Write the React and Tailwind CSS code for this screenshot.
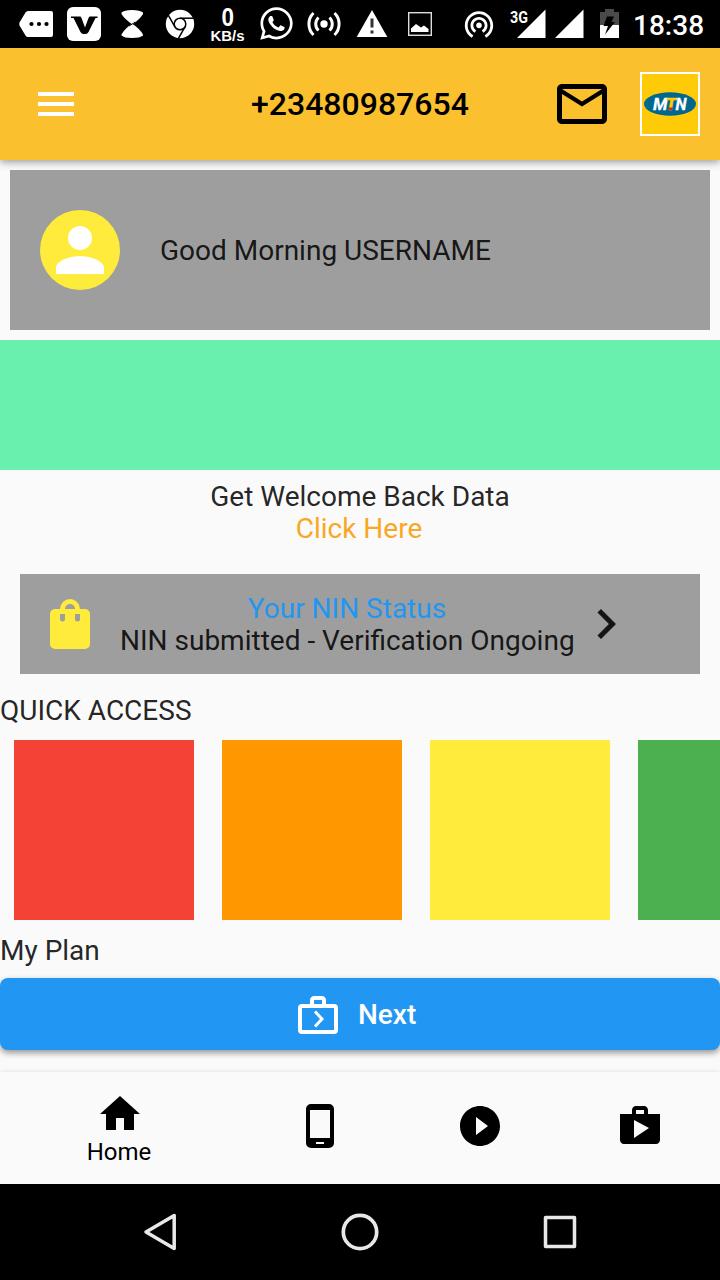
import React from "react";
import {
  MdMailOutline,
  MdPerson,
  MdNavigateNext,
  MdHome,
  MdPlayCircleFilled,
  MdShop,
  MdWifiTethering,
} from "react-icons/md";
import { FaWhatsapp } from "react-icons/fa";

function StatusBar() {
  return (
    <div className="flex h-12 items-center bg-black text-white">
      <svg className="h-12 w-[60px]" viewBox="0 0 60 48">
        <path d="M28 11H51Q53 11 53 13V35Q53 37 51 37H28Q26.500 37 25.500 35.500L19.500 25.500Q19 24 19.500 22.500L25.500 12.500Q26.500 11 28 11Z" fill="#fff" />
        <circle cx="31.500" cy="24" r="2.100" />
        <circle cx="39" cy="24" r="2.100" />
        <circle cx="46.500" cy="24" r="2.100" />
      </svg>
      <svg className="h-12 w-12" viewBox="60 0 48 48">
        <rect x="67" y="7" width="34" height="34" rx="6" fill="#fff" />
        <path d="M71 16.500H80.500L81.500 18L85 27.500L88.500 18L89.500 16.500H97.500V18H95.500L88.500 32Q87.500 34 85.500 34H83.500Q81.500 34 80.500 32L73.500 18H71Z" />
      </svg>
      <svg className="h-12 w-12" viewBox="108 0 48 48">
        <path d="M121.500 14V12.500Q124 10 132 10Q140 10 143 12.500V14Q140 19 132.500 24.500Q124.500 19 121.500 14Z" fill="#fff" />
        <path d="M132 23.500Q140 29 143 34.500V35.500Q140 38 132 38Q124 38 121.500 35.500V34.500Q124.500 29 132 23.500Z" fill="#fff" />
        <path d="M129 26L135.500 22" stroke="#000" strokeWidth="1" />
      </svg>
      <svg className="h-12 w-12" viewBox="156 0 48 48">
        <circle cx="180" cy="24" r="14.200" fill="#fff" />
        <g fill="none" stroke="#000" strokeWidth="1.500">
          <circle cx="180" cy="24" r="5.800" />
          <path d="M180 18.200H193.500" />
          <path d="M180 18.200H193.500" transform="rotate(120 180 24)" />
          <path d="M180 18.200H193.500" transform="rotate(240 180 24)" />
        </g>
      </svg>
      <svg className="h-12 w-12" viewBox="204 0 48 48" fill="#fff">
        <text x="221.500" y="26" fontFamily="Liberation Sans, sans-serif" fontSize="25" fontWeight="700" textLength="12.500" lengthAdjust="spacingAndGlyphs">0</text>
        <text x="210.500" y="40.500" fontFamily="Liberation Sans, sans-serif" fontSize="14" fontWeight="700" textLength="34" lengthAdjust="spacingAndGlyphs">KB/s</text>
      </svg>
      <div className="flex h-12 w-12 items-center justify-center pb-[2px]">
        <FaWhatsapp className="size-[37px]" />
      </div>
      <svg className="h-12 w-12" viewBox="300 0 48 48" fill="none" stroke="#fff" strokeWidth="3">
        <circle cx="324" cy="24" r="3.700" fill="#fff" stroke="none" />
        <path d="M318.500 17.500A9 9 0 0 0 318.500 30.500M329.500 17.500A9 9 0 0 1 329.500 30.500M313.500 13A15.500 15.500 0 0 0 313.500 35M334.500 13A15.500 15.500 0 0 1 334.500 35" />
      </svg>
      <svg className="h-12 w-12" viewBox="348 0 48 48">
        <path d="M372 10L387.300 37H356.700Z" fill="#fff" />
        <path d="M370.500 18.500H373.500V27.500H370.500ZM370.500 30.500H373.500V33.500H370.500Z" fill="#333" />
      </svg>
      <svg className="h-12 w-12" viewBox="396 0 48 48">
        <rect x="408.700" y="12.700" width="22.600" height="22.600" fill="none" stroke="#ddd" strokeWidth="1.400" />
        <path d="M411 32V28.500L416 24L421 27.500L424 25.500L428.500 29V32Z" fill="#fff" />
      </svg>
      <div className="flex h-12 w-[60px] items-center pl-[18px]">
        <MdWifiTethering className="size-[34px]" />
      </div>
      <svg className="h-12 w-[46px]" viewBox="504 0 46 48" fill="#fff">
        <path d="M545.500 9.500V38H517Z" />
        <text x="510" y="22.500" fontFamily="Roboto, sans-serif" fontWeight="700" fontSize="16" textLength="18" lengthAdjust="spacingAndGlyphs" stroke="#000" strokeWidth="2" paintOrder="stroke">3G</text>
      </svg>
      <svg className="h-12 w-10" viewBox="550 0 40 48" fill="#fff">
        <path d="M583.500 9.500V38H555Z" />
      </svg>
      <svg className="h-12 w-10" viewBox="590 0 40 48">
        <path d="M600 12H605V9H614V12H619V25H600Z" fill="#4a4a4a" />
        <path d="M600 25H619V38H600Z" fill="#fff" />
        <path d="M607 16.500H614L611.500 22H615L605 34.500L608 26H603.500Z" />
      </svg>
      <div className="w-[90px] pl-[3px] pt-[4px] font-['Roboto',sans-serif] text-[28px] font-medium leading-8">18:38</div>
    </div>
  );
}

function AppBar() {
  return (
    <header className="relative flex h-28 items-center bg-[#fbc02d] pl-8 pr-5 shadow-[0_2px_8px_rgba(0,0,0,0.4)]">
      <svg className="size-12 shrink-0 text-white" viewBox="0 0 24 24" fill="currentColor">
        <path d="M3 18h18v-2H3v2zm0-5h18v-2H3v2zm0-7v2h18V6H3z" />
      </svg>
      <h1 className="ml-[171px] w-[219px] shrink-0 whitespace-nowrap text-[32px] font-medium leading-10 text-black">+23480987654</h1>
      <MdMailOutline className="ml-[82px] size-[60px] shrink-0 text-black" />
      <div className="ml-7 flex h-16 w-[60px] shrink-0 items-center justify-center border-2 border-white bg-[#ffcb08]">
        <svg className="h-6 w-14" viewBox="0 0 56 24">
          <ellipse cx="28" cy="12" rx="26" ry="11.700" fill="#00678f" />
          <g fontFamily="Roboto, sans-serif" fontWeight="700" fontStyle="italic" fontSize="16.500">
            <text x="11" y="18" fill="#fff" stroke="#fff" strokeWidth="0.300" textLength="14.500" lengthAdjust="spacingAndGlyphs">M</text>
            <text x="24" y="18" fill="#ffcb08" stroke="#ffcb08" strokeWidth="0.700" textLength="10" lengthAdjust="spacingAndGlyphs">T</text>
            <text x="33.500" y="18" fill="#fff" stroke="#fff" strokeWidth="0.300" textLength="11" lengthAdjust="spacingAndGlyphs">N</text>
          </g>
          <path d="M27 15.500H30.500L30 18H26.500Z" fill="#e2231a" />
        </svg>
      </div>
    </header>
  );
}

const tiles = ["bg-[#f44336]", "bg-[#ff9800]", "bg-[#ffeb3b]", "bg-[#4caf50]"];

function BottomNav() {
  return (
    <nav className="mt-[22px] grid h-28 grid-cols-[240px_160px_160px_160px] items-center justify-items-center bg-[#fafafa] text-black shadow-[0_-1px_4px_rgba(0,0,0,0.08)]">
      <div className="flex flex-col items-center">
        <MdHome className="size-12" />
        <span className="-ml-[2px] text-[24px] leading-7">Home</span>
      </div>
      <svg className="mb-1 size-12" viewBox="0 0 24 24" fill="currentColor">
        <path fillRule="evenodd" d="M7.500 1H16.500A2.500 2.500 0 0 1 19 3.500V20.500A2.500 2.500 0 0 1 16.500 23H7.500A2.500 2.500 0 0 1 5 20.500V3.500A2.500 2.500 0 0 1 7.500 1ZM7 4V18H17V4ZM10 20V21H14V20Z" />
      </svg>
      <MdPlayCircleFilled className="mb-1 size-12" />
      <MdShop className="mb-1 size-12" />
    </nav>
  );
}

function SystemNav() {
  return (
    <div className="flex h-24 items-center justify-center gap-[152px] bg-black">
      <svg className="size-12" viewBox="0 0 48 48" fill="none" stroke="#e8e8e8" strokeWidth="3.500" strokeLinejoin="round">
        <path d="M38.200 7.500V40.500L10 24Z" />
      </svg>
      <svg className="size-12" viewBox="0 0 48 48" fill="none" stroke="#e8e8e8" strokeWidth="3.700">
        <circle cx="24" cy="24" r="16.700" />
      </svg>
      <svg className="size-12" viewBox="0 0 48 48" fill="none" stroke="#e8e8e8" strokeWidth="3.500" strokeLinejoin="round">
        <rect x="9.500" y="9.500" width="29" height="29" />
      </svg>
    </div>
  );
}

export default function App() {
  return (
    <div className="flex h-[1280px] w-[720px] flex-col overflow-hidden bg-[#fafafa] font-['Roboto',sans-serif] text-[28px] leading-8 text-black/87">
      <StatusBar />
      <AppBar />
      <main>
        <section className="mx-2.5 mt-2.5 flex h-40 items-center gap-10 bg-[#9e9e9e] pl-[30px]">
          <div className="flex size-20 items-center justify-center rounded-full bg-[#ffeb3b]">
            <MdPerson className="size-[72px] text-white" />
          </div>
          <p className="pt-0.5">Good Morning USERNAME</p>
        </section>
        <div className="mt-2.5 h-[130px] bg-[#69f0ae]" />
        <section className="mt-[11px] text-center">
          <p>Get Welcome Back Data</p>
          <p className="-ml-[2px] text-[#f9a825]">Click Here</p>
        </section>
        <section className="mx-5 mt-[29px] flex h-[100px] items-center bg-[#9e9e9e] pl-5">
          <svg className="size-[60px] shrink-0 text-[#ffeb3b]" viewBox="0 0 24 24" fill="currentColor">
            <path fillRule="evenodd" d="M18 6H16A4 4 0 0 0 8 6H6A2 2 0 0 0 4 8V20A2 2 0 0 0 6 22H18A2 2 0 0 0 20 20V8A2 2 0 0 0 18 6ZM12 4A2 2 0 0 1 14 6H10A2 2 0 0 1 12 4ZM8 8H10V10A1 1 0 0 1 8 10ZM14 8H16V10A1 1 0 0 1 14 10Z" />
          </svg>
          <div className="ml-5 w-[454px] whitespace-nowrap pt-0.5 text-center">
            <p className="text-[#2196f3]">Your NIN Status</p>
            <p>NIN submitted - Verification Ongoing</p>
          </div>
          <MdNavigateNext className="ml-0.5 size-[60px] shrink-0" />
        </section>
        <h2 className="mt-[21px]">QUICK ACCESS</h2>
        <div className="mt-[13px] flex gap-7 overflow-hidden pl-3.5">
          {tiles.map((color) => (
            <div key={color} className={`size-[180px] shrink-0 ${color}`} />
          ))}
        </div>
        <h2 className="mt-[15px]">My Plan</h2>
        <button className="mt-[11px] flex h-[72px] w-full items-center rounded-lg bg-[#2196f3] pl-[294px] pt-0.5 font-medium text-white shadow-[0_3px_6px_rgba(0,0,0,0.4)]">
          <svg className="size-12" viewBox="0 0 48 48" fill="none" stroke="currentColor">
            <rect x="6" y="15" width="36" height="26" rx="2" strokeWidth="4" />
            <path d="M18 14V9.500Q18 7 20.500 7H27.500Q30 7 30 9.500V14" strokeWidth="4" />
            <path d="M21 20.500L28 28L21 35.500" strokeWidth="3" />
          </svg>
          <span className="ml-4">Next</span>
        </button>
      </main>
      <BottomNav />
      <SystemNav />
    </div>
  );
}
